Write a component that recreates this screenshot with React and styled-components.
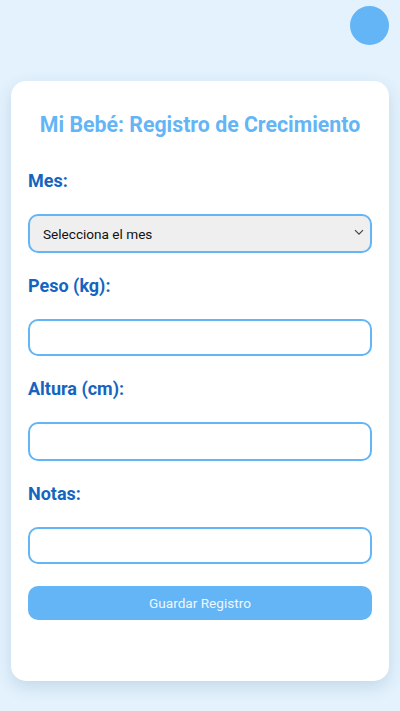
import React, { useState } from "react";
import styled, { createGlobalStyle } from "styled-components";

const GlobalStyle = createGlobalStyle`
  html, body {
    margin: 0;
    padding: 0;
    background: #e3f2fd;
    font-family: Roboto, "Liberation Sans", sans-serif;
  }
`;

const Page = styled.div`
  min-height: 711px;
  padding: 81px 11px 30px;
  box-sizing: border-box;
  position: relative;
`;

const FloatingDot = styled.button`
  position: absolute;
  top: 6px;
  right: 11px;
  width: 39px;
  height: 39px;
  border: none;
  border-radius: 50%;
  background: #64b5f6;
  padding: 0;
`;

const Card = styled.form`
  background: #fff;
  border-radius: 15px;
  box-shadow: 0 6px 16px rgba(60, 100, 140, 0.18);
  padding: 32px 17px 61px;
  display: flex;
  flex-direction: column;
`;

const Title = styled.h1`
  margin: 0 0 33px;
  text-align: center;
  color: #64b5f6;
  font-size: 21.3px;
  line-height: 24px;
  font-weight: 700;
`;

const Label = styled.label`
  display: block;
  color: #1565c0;
  font-size: 18px;
  line-height: 22px;
  font-weight: 700;
  margin-bottom: 22px;
`;

const Field = styled.div`
  margin-bottom: 22px;
  position: relative;
`;

const Input = styled.input`
  display: block;
  width: 100%;
  box-sizing: border-box;
  height: ${(p) => (p.$tall ? 39 : 37)}px;
  border: 2px solid #64b5f6;
  border-radius: 10px;
  background: #fff;
  font-family: inherit;
  font-size: 14px;
  padding: 0 13px;
  outline: none;
`;

const Select = styled.select`
  display: block;
  width: 100%;
  box-sizing: border-box;
  height: 39px;
  border: 2px solid #64b5f6;
  border-radius: 10px;
  background: #efefef;
  font-family: inherit;
  font-size: 13.6px;
  color: #111;
  padding: 0 13px;
  appearance: none;
  outline: none;
`;

const Chevron = styled.svg`
  position: absolute;
  right: 8px;
  top: 15px;
  pointer-events: none;
`;

const SaveButton = styled.button`
  height: 34px;
  border: none;
  border-radius: 10px;
  background: #64b5f6;
  color: #eef7ff;
  font-family: inherit;
  font-size: 13.6px;
`;

const meses = Array.from({ length: 24 }, (_, i) => `Mes ${i + 1}`);

export default function App() {
  const [mes, setMes] = useState("");
  return (
    <Page>
      <GlobalStyle />
      <FloatingDot type="button" aria-label="menu" />
      <Card onSubmit={(e) => e.preventDefault()}>
        <Title>Mi Bebé: Registro de Crecimiento</Title>
        <Label htmlFor="mes">Mes:</Label>
        <Field>
          <Select id="mes" value={mes} onChange={(e) => setMes(e.target.value)}>
            <option value="">Selecciona el mes</option>
            {meses.map((m) => (
              <option key={m} value={m}>
                {m}
              </option>
            ))}
          </Select>
          <Chevron width="10" height="7" viewBox="0 0 10 7">
            <path d="M1 1.2 L5 5.2 L9 1.2" fill="none" stroke="#444" strokeWidth="1.2" />
          </Chevron>
        </Field>
        <Label htmlFor="peso">Peso (kg):</Label>
        <Field>
          <Input id="peso" type="number" />
        </Field>
        <Label htmlFor="altura">Altura (cm):</Label>
        <Field>
          <Input id="altura" type="number" $tall />
        </Field>
        <Label htmlFor="notas">Notas:</Label>
        <Field>
          <Input id="notas" type="text" />
        </Field>
        <SaveButton type="submit">Guardar Registro</SaveButton>
      </Card>
    </Page>
  );
}
